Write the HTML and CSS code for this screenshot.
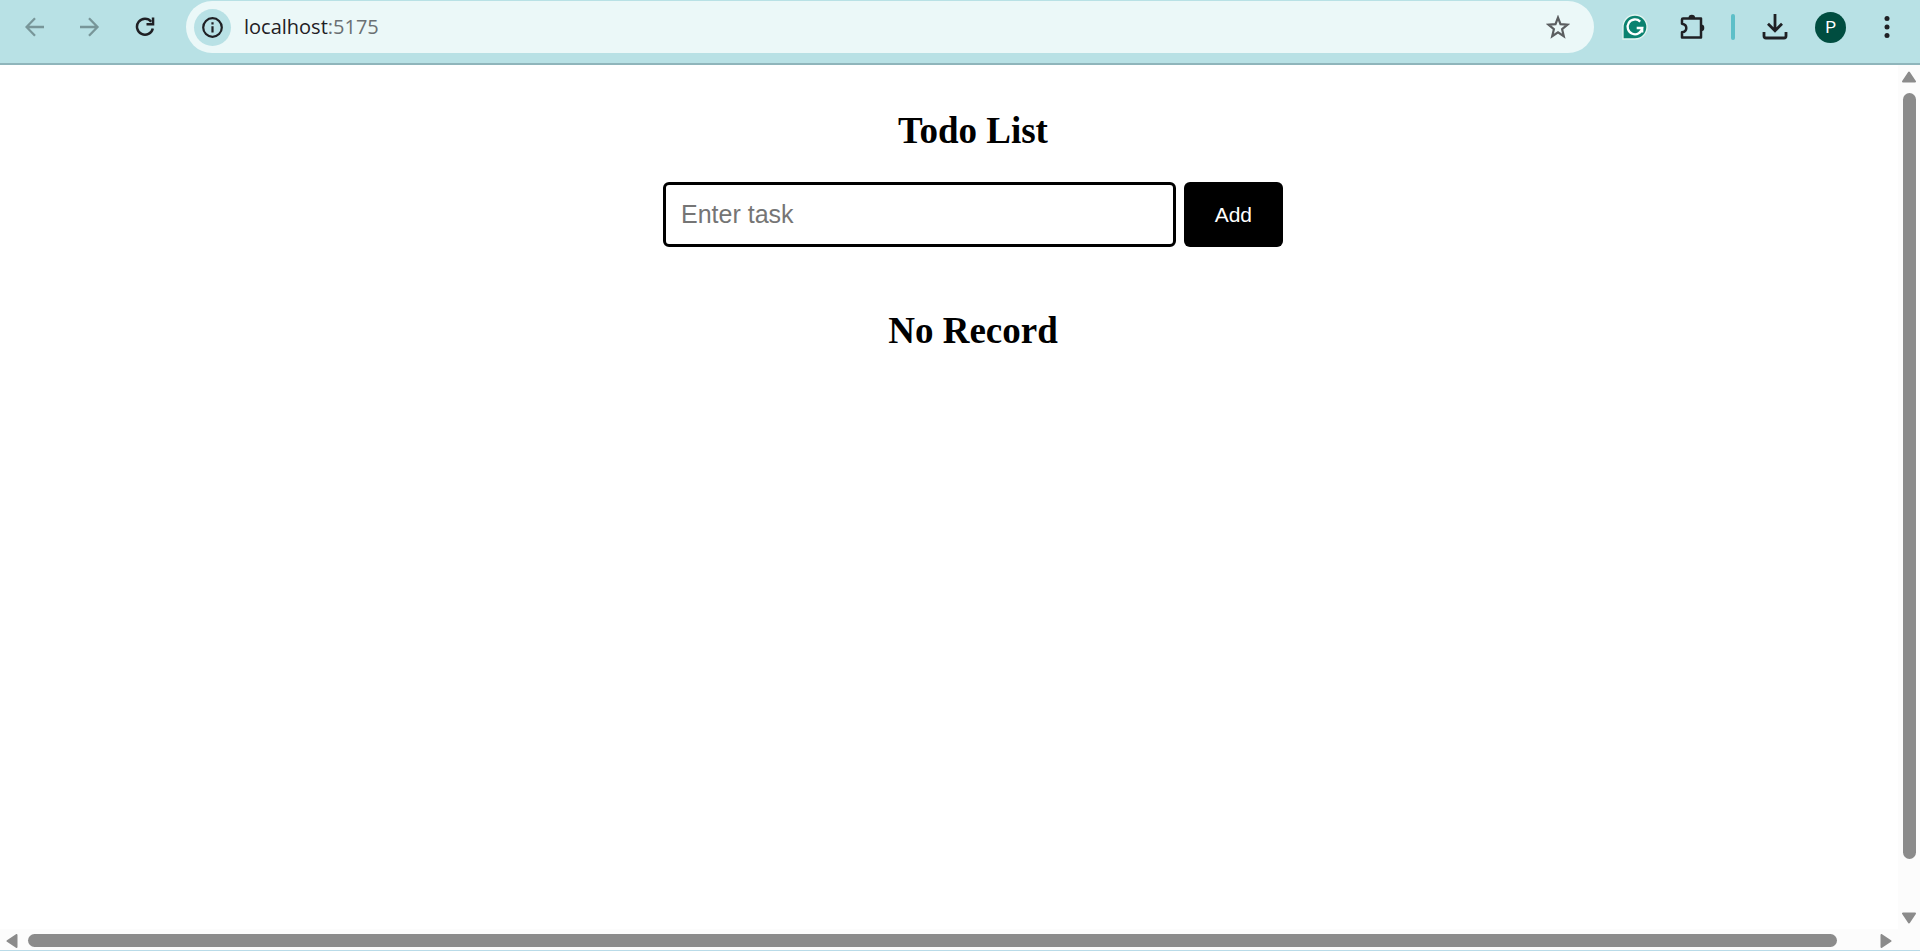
FILE: index.html
```html
<!DOCTYPE html>
<html lang="en">
<head>
<meta charset="utf-8">
<title>Todo List</title>
<link rel="stylesheet" href="styles.css">
</head>
<body>
<div class="browser">
  <header class="toolbar">
    <nav class="nav">
      <button class="icon-btn muted" aria-label="Back" disabled><svg width="20" height="20" viewBox="0 0 20 20"><path d="M19 10H2M10 1.3 1.5 10l8.500 8.700" fill="none" stroke="currentColor" stroke-width="2.300"/></svg></button>
      <button class="icon-btn muted" aria-label="Forward" disabled><svg width="20" height="20" viewBox="0 0 20 20"><path d="M0 10h17M9 1.300l8.500 8.700-8.500 8.700" fill="none" stroke="currentColor" stroke-width="2.300"/></svg></button>
      <button class="icon-btn" aria-label="Reload"><svg width="20" height="20" viewBox="0 0 20 20"><path d="M16.200 4.700A8 8 0 1 0 17.800 11.500" fill="none" stroke="currentColor" stroke-width="2.500"/><path d="M16.800 .6h2.500v7.900h-7.800V6h5.300z" fill="currentColor"/></svg></button>
    </nav>
    <div class="address">
      <button class="site-info" aria-label="Site information"><svg width="21" height="21" viewBox="0 0 21 21"><circle cx="10.500" cy="10.500" r="9.300" fill="none" stroke="currentColor" stroke-width="2.200"/><path d="M9.400 9.200h2.200v6.300H9.400zM9.400 5.200h2.200v2.200H9.400z" fill="currentColor"/></svg></button>
      <div class="url">localhost<span class="port">:5175</span></div>
      <button class="icon-btn star" aria-label="Bookmark"><svg width="24" height="24" viewBox="0 0 24 24"><path d="M12 2.600 14.500 9.200l7 .5-5.400 4.500 1.700 7L12 17.400l-5.800 3.800 1.700-7L2.500 9.700l7-.5z" fill="none" stroke="currentColor" stroke-width="2.200"/></svg></button>
    </div>
    <div class="actions">
      <button class="icon-btn" aria-label="Grammarly"><svg width="26" height="26" viewBox="0 0 26 26"><path d="M13 1a12 12 0 1 1 0 24H1V13A12 12 0 0 1 13 1z" fill="#0b8270" stroke="#e4f5f1" stroke-width="1.300"/><path d="M18.200 7.600A7.400 7.400 0 1 0 20.300 14h-5.600M20.200 13.400v5" fill="none" stroke="#fff" stroke-width="2.300"/></svg></button>
      <button class="icon-btn" aria-label="Extensions"><svg width="28" height="28" viewBox="0 0 28 28"><path d="M5 5.500h18v19H4v-5.200c3.600-.4 4.300-2.500 4.300-4.300S7.200 11.200 4 10.700V6.500q0-1 1-1z" fill="none" stroke="currentColor" stroke-width="2.500" stroke-linejoin="round"/><path d="M10.500 5a3.300 3.300 0 0 1 6.600 0zM23 11.600a3.300 3.300 0 0 1 0 6.600z" fill="currentColor"/></svg></button>
      <span class="divider"></span>
      <button class="icon-btn" aria-label="Downloads"><svg width="26" height="26" viewBox="0 0 26 26"><path d="M13 0v16M6 9.700l7 7 7-7" fill="none" stroke="currentColor" stroke-width="2.800"/><path d="M2 18v4q0 2 2 2h18q2 0 2-2v-4" fill="none" stroke="currentColor" stroke-width="2.800"/></svg></button>
      <button class="avatar" aria-label="Profile">P</button>
      <button class="icon-btn" aria-label="Menu"><svg width="6" height="22" viewBox="0 0 6 22"><g fill="currentColor"><circle cx="3" cy="2.500" r="2.500"/><circle cx="3" cy="11" r="2.500"/><circle cx="3" cy="19.500" r="2.500"/></g></svg></button>
    </div>
  </header>
  <div class="viewport">
    <main class="page">
      <h1 class="heading">Todo List</h1>
      <form class="task-form">
        <input class="task-input" type="text" placeholder="Enter task" aria-label="Enter task">
        <button class="add-btn" type="button">Add</button>
      </form>
      <h2 class="heading">No Record</h2>
    </main>
    <div class="scroll vertical">
      <svg width="14" height="12" viewBox="0 0 14 12"><path d="M7 1.500 13 10.500H1z" fill="currentColor" stroke="currentColor" stroke-width="2" stroke-linejoin="round"/></svg>
      <div class="track"><div class="thumb"></div></div>
      <svg width="14" height="12" viewBox="0 0 14 12"><path d="M7 10.500 1 1.500h12z" fill="currentColor" stroke="currentColor" stroke-width="2" stroke-linejoin="round"/></svg>
    </div>
  </div>
  <div class="scroll horizontal">
    <svg width="12" height="14" viewBox="0 0 12 14"><path d="M1.500 7 10.500 1v12z" fill="currentColor" stroke="currentColor" stroke-width="2" stroke-linejoin="round"/></svg>
    <div class="track"><div class="thumb"></div></div>
    <svg width="12" height="14" viewBox="0 0 12 14"><path d="M10.500 7 1.500 1v12z" fill="currentColor" stroke="currentColor" stroke-width="2" stroke-linejoin="round"/></svg>
  </div>
</div>
</body>
</html>
```

FILE: styles.css
```css
* { box-sizing: border-box; }

body { margin: 0; background: #fff; }

button { border: 0; padding: 0; background: none; font: inherit; }

svg { display: block; flex: none; }

.browser {
  display: flex;
  flex-direction: column;
  height: 100vh;
  border-bottom: 1px solid #b9dbe8;
}

.toolbar {
  display: flex;
  align-items: flex-start;
  padding: 1px 30px 10px 25px;
  background: #b8e1e5;
  border-bottom: 2px solid #8fb5bb;
}

.nav {
  display: flex;
  align-items: center;
  gap: 35px;
  height: 52px;
  margin-right: 31px;
}

.icon-btn { color: #1f2024; }
.muted { color: #789699; }

.address {
  display: flex;
  flex: 1;
  align-items: center;
  height: 52px;
  padding: 0 24px 0 8px;
  border-radius: 26px;
  background: #ebf8f8;
}

.site-info {
  display: grid;
  place-items: center;
  width: 37px;
  height: 37px;
  border-radius: 50%;
  background: #b8e1e5;
  color: #1f2024;
}

.url {
  flex: 1;
  margin-left: 13px;
  font: 20px/28px "Open Sans", "Noto Sans", sans-serif;
  color: #1f2024;
}

.port { color: #6a7073; }
.star { color: #5b5e60; }

.actions {
  display: flex;
  align-items: center;
  height: 52px;
  margin-left: 28px;
}

.actions > * + * { margin-left: 30px; }

.actions > .divider {
  width: 4px;
  height: 26px;
  margin-left: 25px;
  border-radius: 2px;
  background: #5dbfc8;
}

.actions > .divider + * { margin-left: 27px; }

.actions > .avatar {
  width: 31px;
  height: 31px;
  margin-left: 27px;
  border-radius: 50%;
  background: #004d40;
  color: #fff;
  font: 17px/31px Roboto, sans-serif;
}

.actions > .avatar + * { margin-left: 38px; }

.viewport {
  display: flex;
  flex: 1;
  min-height: 0;
}

.page {
  display: flex;
  flex: 1;
  flex-direction: column;
  align-items: center;
  padding: 45px 0 0 48px;
}

.heading {
  margin: 0;
  font: bold 37px/42px "Liberation Serif", serif;
  color: #000;
}

.task-form {
  display: flex;
  gap: 8px;
  width: 620px;
  max-width: 100%;
  margin: 30px 0 63px;
}

.task-input {
  flex: 1;
  min-width: 0;
  padding: 15px;
  border: 3px solid #000;
  border-radius: 6px;
  outline: 0;
  background: #fff;
  font: 25px/29px "Liberation Sans", sans-serif;
}

.task-input::placeholder { color: #757575; }

.add-btn {
  padding: 0 31px;
  border-radius: 6px;
  background: #000;
  color: #fff;
  font: 21px/24px "Liberation Sans", sans-serif;
}

.scroll {
  display: flex;
  align-items: center;
  background: #fcfcfc;
  color: #8b8b8b;
}

.vertical {
  flex-direction: column;
  width: 22px;
  padding: 6px 0 5px;
}

.horizontal {
  height: 21px;
  padding: 5px 28px 3px 6px;
}

.track { flex: 1; }

.thumb {
  border-radius: 7px;
  background: #8b8b8b;
}

.vertical .track { width: 13px; margin: 10px 0; }
.vertical .thumb { height: calc(100% - 43px); }
.horizontal .track { height: 13px; margin: 0 10px; }
.horizontal .thumb { width: calc(100% - 33px); height: 13px; }
```
